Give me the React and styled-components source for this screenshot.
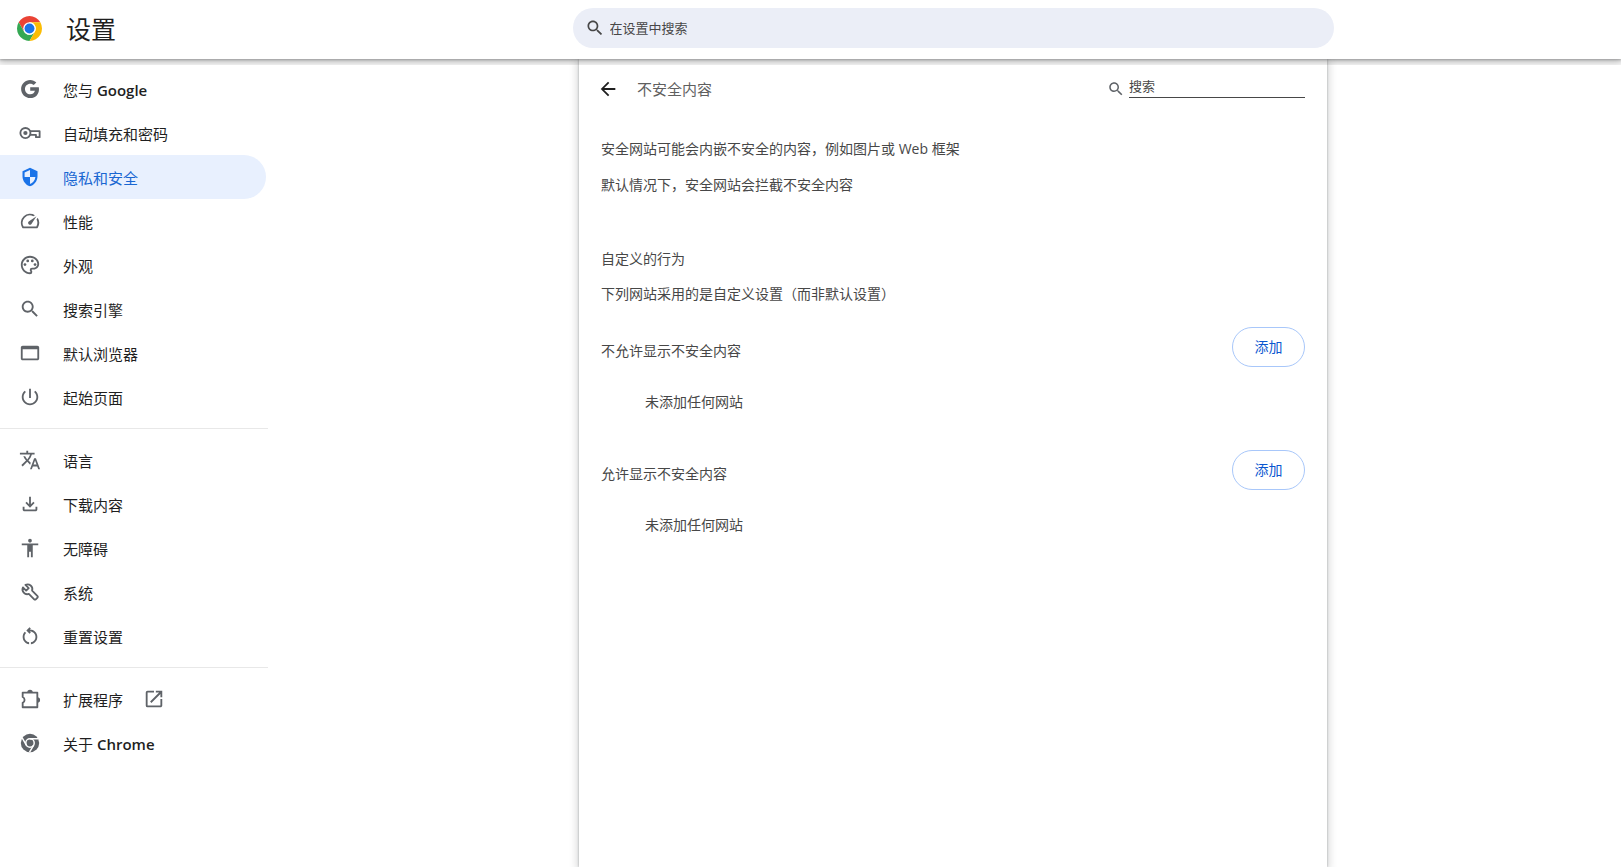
import React from 'react';
import styled, { createGlobalStyle } from 'styled-components';

const colors = {
  text: '#1f1f1f',
  body: '#474747',
  icon: '#5f6368',
  link: '#0b57d0',
  active: '#1a73e8',
  activeText: '#1967d2',
  activeBackground: '#e8f0fe',
  field: '#ebeef7',
  outline: '#a8c7fa',
  divider: '#e8e8e8',
};

const GlobalStyle = createGlobalStyle`
  *, *::before, *::after {
    box-sizing: border-box;
  }

  body {
    margin: 0;
    background: #fff;
    color: ${colors.body};
    font-family: 'Open Sans', 'Noto Sans CJK SC', sans-serif;
    font-size: 14px;
    line-height: 20px;
  }
`;

const Styles = {
  Page: styled.div`
    display: flex;
    flex-direction: column;
    min-height: 100vh;
  `,
  Header: styled.header`
    display: grid;
    grid-template-columns: 285px 1fr;
    align-items: center;
    height: 59px;
    padding-bottom: 3px;
    background: #fff;
    box-shadow: 0 1px 2px rgba(60, 64, 67, 0.3), 0 1px 8px 2px rgba(0, 0, 0, 0.3);
    clip-path: inset(0 0 -6px 0);
    z-index: 1;
  `,
  Brand: styled.div`
    display: flex;
    align-items: center;
    gap: 24px;
    padding-left: 17px;
  `,
  BrandTitle: styled.h1`
    margin: 0;
    padding-top: 2px;
    color: ${colors.text};
    font-size: 25px;
    font-weight: 400;
    line-height: 32px;
  `,
  SearchField: styled.label`
    display: flex;
    align-items: center;
    justify-self: center;
    gap: 5px;
    width: 100%;
    max-width: 761px;
    height: 40px;
    padding: 0 12px;
    border-radius: 20px;
    background: ${colors.field};
    color: ${colors.body};
  `,
  Input: styled.input`
    flex: 1;
    min-width: 0;
    padding: 0;
    border: 0;
    outline: 0;
    background: transparent;
    color: ${colors.body};
    font: inherit;
    font-size: 13px;
    line-height: 20px;

    &::placeholder {
      color: ${colors.body};
      opacity: 1;
    }
  `,
  Body: styled.div`
    flex: 1;
    display: grid;
    grid-template-columns: 285px 1fr;
  `,
  Nav: styled.nav`
    width: 268px;
    padding-top: 8px;
  `,
  NavItem: styled.a`
    display: flex;
    align-items: center;
    height: 44px;
    margin-right: 2px;
    padding-left: 19px;
    border-radius: 0 22px 22px 0;
    background: ${({ $active }) => ($active ? colors.activeBackground : 'transparent')};
    color: ${({ $active }) => ($active ? colors.activeText : colors.text)};
    font-size: 15px;
    text-decoration: none;
  `,
  NavIcon: styled.span`
    display: flex;
    justify-content: center;
    width: 22px;
    color: ${({ $active }) => ($active ? colors.active : colors.icon)};
  `,
  NavLabel: styled.span`
    margin: 0 20px 0 22px;
    padding-top: 2px;
  `,
  Product: styled.span`
    font-weight: 600;
  `,
  Divider: styled.hr`
    height: 1px;
    margin: 9px 0;
    border: 0;
    background: ${colors.divider};
  `,
  Card: styled.main`
    justify-self: center;
    width: 100%;
    max-width: 748px;
    padding: 0 22px;
    background: #fff;
    box-shadow: 0 0 2px rgba(60, 64, 67, 0.4), 0 2px 8px 2px rgba(60, 64, 67, 0.2);
  `,
  CardHeader: styled.div`
    display: flex;
    align-items: center;
    height: 60px;
  `,
  BackButton: styled.button`
    display: flex;
    margin: 0 18px 0 -4px;
    padding: 0;
    border: 0;
    background: transparent;
    color: ${colors.text};
  `,
  CardTitle: styled.h2`
    flex: 1;
    margin: 0;
    color: #5f5f5f;
    font-size: 15px;
    font-weight: 400;
  `,
  CardSearch: styled.label`
    display: flex;
    align-items: center;
    gap: 4px;
    color: ${colors.icon};
  `,
  Underlined: styled.span`
    display: flex;
    width: 176px;
    margin-bottom: 4px;
    padding-bottom: 1px;
    border-bottom: 1px solid ${colors.body};
  `,
  Text: styled.p`
    margin: 0;
    padding: 8px 0;
  `,
  Intro: styled.section`
    padding: 12px 0 38px;
  `,
  SectionTitle: styled.h3`
    margin: 0;
    padding: 8px 0 7px;
    font-size: 14px;
    font-weight: 400;
  `,
  Lists: styled.div`
    padding-top: 7px;
  `,
  ListHeader: styled.div`
    display: flex;
    align-items: center;
    justify-content: space-between;
    height: 56px;
  `,
  ListTitle: styled.h3`
    margin: 0;
    padding-top: 8px;
    font-size: 14px;
    font-weight: 400;
  `,
  ListEmpty: styled.p`
    margin: 0;
    padding: 17px 44px 30px;
  `,
  AddButton: styled.button`
    min-width: 73px;
    height: 40px;
    padding: 0 20px;
    border: 1px solid ${colors.outline};
    border-radius: 20px;
    background: #fff;
    color: ${colors.link};
    font: inherit;
  `,
};

const Icon = ({ size = 22, children }) => (
  <svg width={size} height={size} viewBox="0 0 24 24" fill="currentColor" aria-hidden="true">
    {children}
  </svg>
);

const paths = {
  search: 'M15.5 14h-.79l-.28-.27C15.41 12.59 16 11.11 16 9.5 16 5.91 13.09 3 9.5 3S3 5.91 3 9.5 5.91 16 9.5 16c1.61 0 3.09-.59 4.23-1.57l.27.28v.79l5 4.99L20.49 19l-4.99-5zm-6 0C7.01 14 5 11.99 5 9.5S7.01 5 9.5 5 14 7.01 14 9.5 11.99 14 9.5 14z',
  google: 'M12.24 10.1V13.9h5.1c-.4 1.8-2.1 3.9-5.1 3.9-3.2 0-5.75-2.6-5.75-5.8s2.55-5.8 5.75-5.8c1.75 0 3 .7 3.8 1.47l2.85-2.8C17.03 3.1 14.84 2.1 12.24 2.1 6.7 2.1 2.3 6.5 2.3 12s4.4 9.9 9.94 9.9c5.68 0 9.55-4 9.55-9.7 0-.75-.07-1.4-.2-2.1h-9.35z',
  shield: 'M12 1L3 5v6c0 5.55 3.84 10.74 9 12 5.16-1.26 9-6.45 9-12V5l-9-4zm0 10.99h6.5c-.53 4.12-3.28 7.29-6.5 8.44V12H5.5V6.6l6.5-2.9v8.3z',
  speed: 'M20.38 8.57l-1.23 1.85a8 8 0 0 1-.22 7.58H5.07A8 8 0 0 1 15.58 6.85l1.85-1.23A10 10 0 0 0 3.35 19a2 2 0 0 0 1.72 1h13.85a2 2 0 0 0 1.74-1 10 10 0 0 0-.27-10.44zm-9.79 6.84a2 2 0 0 0 2.83 0l5.66-8.49-8.49 5.66a2 2 0 0 0 0 2.83z',
  palette: 'M12 22C6.49 22 2 17.51 2 12S6.49 2 12 2s10 4.04 10 9c0 3.31-2.69 6-6 6h-1.77c-.28 0-.5.22-.5.5 0 .12.05.23.13.33.41.47.64 1.06.64 1.67A2.5 2.5 0 0 1 12 22zm0-18c-4.41 0-8 3.59-8 8s3.59 8 8 8c.28 0 .5-.22.5-.5a.54.54 0 0 0-.14-.35c-.41-.46-.63-1.05-.63-1.65a2.5 2.5 0 0 1 2.5-2.5H16c2.21 0 4-1.79 4-4 0-3.86-3.59-7-8-7z',
  browser: 'M20 4H4c-1.1 0-2 .9-2 2v12c0 1.1.9 2 2 2h16c1.1 0 2-.9 2-2V6c0-1.1-.9-2-2-2zm0 14H4V8h16v10z',
  power: 'M13 3h-2v10h2V3zm4.83 2.17l-1.42 1.42C17.99 7.86 19 9.81 19 12c0 3.87-3.13 7-7 7s-7-3.13-7-7c0-2.19 1.01-4.14 2.58-5.42L6.17 5.17C4.23 6.82 3 9.26 3 12c0 4.97 4.03 9 9 9s9-4.03 9-9c0-2.74-1.23-5.18-3.17-6.83z',
  translate: 'M12.87 15.07l-2.54-2.51.03-.03c1.74-1.94 2.98-4.17 3.71-6.53H17V4h-7V2H8v2H1v1.99h11.17C11.5 7.92 10.44 9.75 9 11.35 8.07 10.32 7.3 9.19 6.69 8h-2c.73 1.63 1.73 3.17 2.98 4.56l-5.09 5.02L4 19l5-5 3.11 3.11.76-2.04zM18.5 10h-2L12 22h2l1.12-3h4.75L21 22h2l-4.5-12zm-2.62 7l1.62-4.33L19.12 17h-3.24z',
  download: 'M12 16l-5-5 1.4-1.45 2.6 2.6V4h2v8.15l2.6-2.6L17 11l-5 5zM6 20c-1.1 0-2-.9-2-2v-3h2v3h12v-3h2v3c0 1.1-.9 2-2 2H6z',
  accessibility: 'M12 2c1.1 0 2 .9 2 2s-.9 2-2 2-2-.9-2-2 .9-2 2-2zm9 7h-6v13h-2v-6h-2v6H9V9H3V7h18v2z',
  reset: 'M6 13c0-1.65.67-3.15 1.76-4.24L6.34 7.34C4.9 8.79 4 10.79 4 13c0 4.08 3.05 7.44 7 7.93v-2.02c-2.83-.48-5-2.94-5-5.91zm14 0c0-4.42-3.58-8-8-8-.06 0-.12.01-.18.01l1.09-1.09L11.5 2.5 8 6l3.5 3.5 1.41-1.41-1.08-1.08c.06 0 .12-.01.17-.01 3.31 0 6 2.69 6 6 0 2.97-2.17 5.43-5 5.91v2.02c3.95-.49 7-3.85 7-7.93z',
  launch: 'M19 19H5V5h7V3H5a2 2 0 0 0-2 2v14a2 2 0 0 0 2 2h14c1.1 0 2-.9 2-2v-7h-2v7zM14 3v2h3.59l-9.83 9.83 1.41 1.41L19 6.41V10h2V3h-7z',
  back: 'M20 11H7.83l5.59-5.59L12 4l-8 8 8 8 1.41-1.41L7.83 13H20v-2z',
};

const PathIcon = ({ name, size }) => <Icon size={size}><path d={paths[name]} /></Icon>;

const KeyIcon = () => (
  <Icon>
    <g fill="none" stroke="currentColor" strokeWidth="2">
      <circle cx="7" cy="12" r="5.5" />
      <path d="M12 10H22.500v6.500h-4V14H12" strokeLinejoin="round" />
    </g>
    <circle cx="7" cy="12" r="2.3" />
  </Icon>
);

const PaletteIcon = () => (
  <Icon>
    <path d={paths.palette} />
    <circle cx="6.5" cy="11.5" r="1.5" />
    <circle cx="9.5" cy="7.5" r="1.5" />
    <circle cx="14.5" cy="7.5" r="1.5" />
    <circle cx="17.5" cy="11.5" r="1.5" />
  </Icon>
);

const WrenchIcon = () => (
  <Icon>
    <path
      d="M7 4.300a5.200 5.200 0 0 1 7.300 6.200l5.900 5.900a1.200 1.200 0 0 1 0 1.700l-1.900 1.900a1.200 1.200 0 0 1-1.700 0l-5.900-5.900A5.200 5.200 0 0 1 4.300 7l3.500 3.500 2.800-2.800z"
      fill="none"
      stroke="currentColor"
      strokeWidth="2"
      strokeLinejoin="round"
    />
  </Icon>
);

const ExtensionIcon = () => (
  <Icon>
    <path
      d="M4 5H20V21H4V16.200a3.500 3.500 0 0 0 0-6.400z"
      fill="none"
      stroke="currentColor"
      strokeWidth="2"
      strokeLinejoin="round"
    />
    <path d="M9 5a3 3 0 0 1 6 0zM20 10a3 3 0 0 1 0 6z" />
  </Icon>
);

const ChromeIcon = () => (
  <Icon>
    <circle cx="12" cy="12" r="10" />
    <g fill="none" stroke="#fff" strokeWidth="1.6">
      <circle cx="12" cy="12" r="4.6" />
      <path d="M12 7.4h9M8 14.3L3.5 6.5M16 14.3L11.5 22" />
    </g>
  </Icon>
);

const ChromeLogo = () => (
  <svg width="25" height="25" viewBox="0 0 48 48" aria-hidden="true">
    <path fill="#ea4335" d="M24 12h20.78A24 24 0 0 0 3.22 12l10.39 18z" />
    <path fill="#34a853" d="M34.39 30L24 48A24 24 0 0 1 3.22 12l10.39 18a12 12 0 0 0 20.78 0z" />
    <path fill="#fbbc04" d="M24 12h20.78A24 24 0 0 1 24 48l10.39-18A12 12 0 0 0 24 12z" />
    <circle cx="24" cy="24" r="12" fill="#fff" />
    <circle cx="24" cy="24" r="9.5" fill="#1a73e8" />
  </svg>
);

const navGroups = [
  [
    { label: '您与', product: 'Google', icon: <PathIcon name="google" /> },
    { label: '自动填充和密码', icon: <KeyIcon /> },
    { label: '隐私和安全', icon: <PathIcon name="shield" size={20} />, active: true },
    { label: '性能', icon: <PathIcon name="speed" /> },
    { label: '外观', icon: <PaletteIcon /> },
    { label: '搜索引擎', icon: <PathIcon name="search" /> },
    { label: '默认浏览器', icon: <PathIcon name="browser" /> },
    { label: '起始页面', icon: <PathIcon name="power" /> },
  ],
  [
    { label: '语言', icon: <PathIcon name="translate" /> },
    { label: '下载内容', icon: <PathIcon name="download" /> },
    { label: '无障碍', icon: <PathIcon name="accessibility" /> },
    { label: '系统', icon: <WrenchIcon /> },
    { label: '重置设置', icon: <PathIcon name="reset" /> },
  ],
  [
    { label: '扩展程序', icon: <ExtensionIcon />, external: true },
    { label: '关于', product: 'Chrome', icon: <ChromeIcon /> },
  ],
];

const Header = () => (
  <Styles.Header>
    <Styles.Brand>
      <ChromeLogo />
      <Styles.BrandTitle>设置</Styles.BrandTitle>
    </Styles.Brand>
    <Styles.SearchField>
      <PathIcon name="search" size={20} />
      <Styles.Input type="text" placeholder="在设置中搜索" aria-label="在设置中搜索" />
    </Styles.SearchField>
  </Styles.Header>
);

const Sidebar = () => (
  <Styles.Nav>
    {navGroups.map((items, index) => (
      <React.Fragment key={items[0].label}>
        {index > 0 && <Styles.Divider />}
        {items.map(({ label, product, icon, active, external }) => (
          <Styles.NavItem
            key={label}
            href="#"
            $active={active}
            aria-current={active ? 'page' : undefined}
          >
            <Styles.NavIcon $active={active}>{icon}</Styles.NavIcon>
            <Styles.NavLabel>
              {label}
              {product && <Styles.Product>{` ${product}`}</Styles.Product>}
            </Styles.NavLabel>
            {external && (
              <Styles.NavIcon>
                <PathIcon name="launch" />
              </Styles.NavIcon>
            )}
          </Styles.NavItem>
        ))}
      </React.Fragment>
    ))}
  </Styles.Nav>
);

const SiteList = ({ title }) => (
  <section>
    <Styles.ListHeader>
      <Styles.ListTitle>{title}</Styles.ListTitle>
      <Styles.AddButton type="button">添加</Styles.AddButton>
    </Styles.ListHeader>
    <Styles.ListEmpty>未添加任何网站</Styles.ListEmpty>
  </section>
);

const App = () => (
  <Styles.Page>
    <GlobalStyle />
    <Header />
    <Styles.Body>
      <Sidebar />
      <Styles.Card>
        <Styles.CardHeader>
          <Styles.BackButton type="button" aria-label="返回">
            <PathIcon name="back" />
          </Styles.BackButton>
          <Styles.CardTitle>不安全内容</Styles.CardTitle>
          <Styles.CardSearch>
            <PathIcon name="search" size={18} />
            <Styles.Underlined>
              <Styles.Input type="text" placeholder="搜索" aria-label="搜索" />
            </Styles.Underlined>
          </Styles.CardSearch>
        </Styles.CardHeader>
        <Styles.Intro>
          <Styles.Text>安全网站可能会内嵌不安全的内容，例如图片或 Web 框架</Styles.Text>
          <Styles.Text>默认情况下，安全网站会拦截不安全内容</Styles.Text>
        </Styles.Intro>
        <Styles.SectionTitle>自定义的行为</Styles.SectionTitle>
        <Styles.Text>下列网站采用的是自定义设置（而非默认设置）</Styles.Text>
        <Styles.Lists>
          <SiteList title="不允许显示不安全内容" />
          <SiteList title="允许显示不安全内容" />
        </Styles.Lists>
      </Styles.Card>
    </Styles.Body>
  </Styles.Page>
);

export default App;
